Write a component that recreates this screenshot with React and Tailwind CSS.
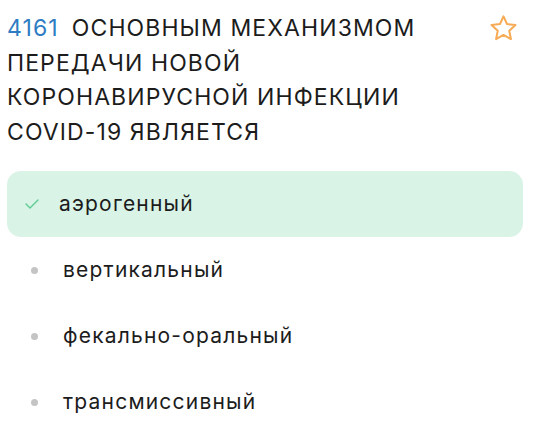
import React from "react";

const options = [
  { text: "аэрогенный", correct: true },
  { text: "вертикальный" },
  { text: "фекально-оральный" },
  { text: "трансмиссивный" },
];

const Star = () => (
  <svg width="35" height="33" viewBox="0 0 24 24" fill="none" stroke="#f7ab56" strokeWidth="1.5" strokeLinejoin="round">
    <path d="M12 3.2l2.6 5.6 6.1.7-4.5 4.2 1.2 6-5.4-3-5.4 3 1.2-6-4.5-4.2 6.1-.7z" />
  </svg>
);

const Check = () => (
  <svg width="14" height="10" viewBox="0 0 14 10" fill="none" stroke="#5ccc92" strokeWidth="1.4" strokeLinecap="round" strokeLinejoin="round">
    <path d="M1 5l4 4 8-8" />
  </svg>
);

const App = () => {
  return (
    <div className="w-[536px] h-[444px] bg-white overflow-hidden font-['Inter',sans-serif] text-[#1c1c1c]">
      {/* --- Question --- */}
      <div className="flex justify-between pl-[7px] pr-[15px] pt-[11px]">
        <h1 className="w-[470px] text-[23px] leading-[34.5px] tracking-[1.1px] font-normal">
          <span className="text-[#2e7cc3] mr-[13px]">4161</span>
          <span>ОСНОВНЫМ МЕХАНИЗМОМ ПЕРЕДАЧИ НОВОЙ КОРОНАВИРУСНОЙ ИНФЕКЦИИ COVID-19 ЯВЛЯЕТСЯ</span>
        </h1>
        <div className="pt-[1px]">
          <Star />
        </div>
      </div>

      {/* --- Answers --- */}
      <div className="mt-[22px] pl-[7px] pr-[13px] flex flex-col">
        {options.map((o, i) =>
          o.correct ? (
            <div key={i} className="h-[66px] flex items-center rounded-[14px] bg-[#d9f3e6]">
              <div className="w-[52px] flex justify-end pr-[20px]">
                <Check />
              </div>
              <span className="text-[21px] tracking-[1.2px]">{o.text}</span>
            </div>
          ) : (
            <div key={i} className="h-[66px] flex items-center">
              <div className="w-[56px] flex justify-center">
                <span className="block w-[7px] h-[7px] rounded-full bg-[#c4c4c4] ml-[-2px]" />
              </div>
              <span className="text-[21px] tracking-[1.2px]">{o.text}</span>
            </div>
          )
        )}
      </div>
    </div>
  );
};

export default App;
